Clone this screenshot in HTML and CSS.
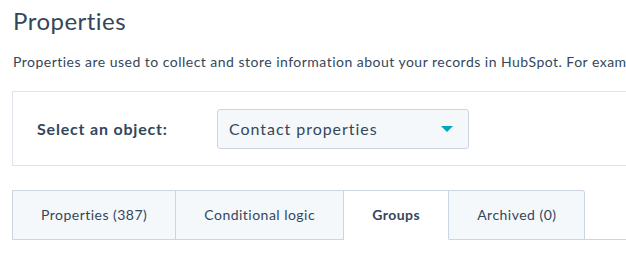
FILE: index.html
```html
<!DOCTYPE html>
<html>
<head>
	<meta charset="utf-8">
	<title>Properties</title>
	<link rel="stylesheet" href="styles.css">
</head>
<body>
	<div class="page">
		<h1 class="title">Properties</h1>
		<p class="intro">Properties are used to collect and store information about your records in HubSpot. For example</p>
		<div class="object-box">
			<span class="object-label">Select an object:</span>
			<div class="select">
				<span>Contact properties</span>
				<span class="caret"></span>
			</div>
		</div>
		<ul class="tabs">
			<li class="tab">Properties (387)</li>
			<li class="tab">Conditional logic</li>
			<li class="tab active">Groups</li>
			<li class="tab">Archived (0)</li>
		</ul>
	</div>
</body>
</html>
```

FILE: styles.css
```css
*{margin: 0; padding: 0; box-sizing: border-box;}
html, body{overflow: hidden;}
body{font-family: Lato, "Liberation Sans", sans-serif; color: #33475b; background: #fff; letter-spacing: 0.03em;}
.page{padding: 6px 0 0 12px; width: 626px; overflow: hidden;}
.title{font-size: 24px; font-weight: 400; line-height: 30px; padding-left: 1px;}
.intro{font-size: 14px; line-height: 20px; margin-top: 16px; padding-left: 1px; white-space: nowrap; overflow: hidden;}
.object-box{display: flex; align-items: center; margin-top: 19px; width: 640px; height: 75px; border: 1px solid #dfe3eb; padding: 0 0 0 24px;}
.object-label{font-size: 16px; font-weight: 700; letter-spacing: 0.05em; width: 180px;}
.select{display: flex; align-items: center; justify-content: space-between; width: 252px; height: 40px; background: #f5f8fa; border: 1px solid #cbd6e2; border-radius: 3px; padding: 0 15px 0 11px; font-size: 16px; letter-spacing: 0.06em;}
.caret{width: 0; height: 0; border-left: 6px solid transparent; border-right: 6px solid transparent; border-top: 6px solid #00a4bd;}
.tabs{display: flex; list-style: none; margin-top: 24px; border-bottom: 1px solid #cbd6e2;}
.tab{height: 50px; line-height: 48px; padding: 0 28px; font-size: 14px; background: #f5f8fa; border: 1px solid #cbd6e2; border-left: none; margin-bottom: -1px;}
.tab:first-child{border-left: 1px solid #cbd6e2;}
.tab:last-child{border-top-right-radius: 3px;}
.tab.active{background: #fff; border-bottom-color: #fff; font-weight: 700;}
```
